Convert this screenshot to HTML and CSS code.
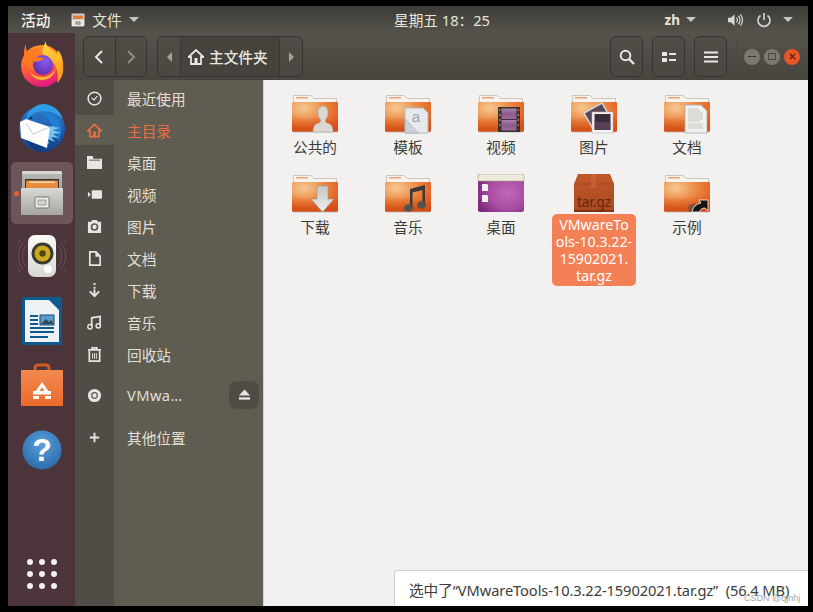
FILE: index.html
```html
<!DOCTYPE html>
<html lang="zh">
<head>
<meta charset="utf-8">
<title>主文件夹</title>
<link rel="stylesheet" href="styles.css">
</head>
<body>
<svg class="defs" aria-hidden="true">
  <defs>
    <radialGradient id="fglow" cx="0.25" cy="0.2" r="0.9">
      <stop offset="0" stop-color="#f6c990"/><stop offset="0.55" stop-color="#ea8440"/><stop offset="1" stop-color="#e2571c"/>
    </radialGradient>
    <linearGradient id="fshade" x1="0" y1="0" x2="0" y2="1">
      <stop offset="0.5" stop-color="#d84e12" stop-opacity="0"/><stop offset="1" stop-color="#cd4a12" stop-opacity="0.85"/>
    </linearGradient>
    <radialGradient id="purple" cx="0.65" cy="0.5" r="0.7">
      <stop offset="0" stop-color="#c068b8"/><stop offset="0.6" stop-color="#a84ca2"/><stop offset="1" stop-color="#7b2a7c"/>
    </radialGradient>
    <linearGradient id="film" x1="0" y1="0" x2="0" y2="1">
      <stop offset="0" stop-color="#a882ac"/><stop offset="0.5" stop-color="#8a5a8c"/><stop offset="1" stop-color="#9c6a98"/>
    </linearGradient>
    <linearGradient id="arrow" x1="0" y1="0" x2="0" y2="1">
      <stop offset="0" stop-color="#c9c7c3"/><stop offset="1" stop-color="#f0efed"/>
    </linearGradient>
    <linearGradient id="box" x1="0" y1="0" x2="0" y2="1">
      <stop offset="0" stop-color="#c2582a"/><stop offset="1" stop-color="#a9481e"/>
    </linearGradient>
    <linearGradient id="fox" x1="0.2" y1="0" x2="0.5" y2="1">
      <stop offset="0" stop-color="#ff9a26"/><stop offset="0.55" stop-color="#ff5a3a"/><stop offset="1" stop-color="#e31587"/>
    </linearGradient>
    <linearGradient id="foxy" x1="0" y1="0" x2="0.6" y2="1">
      <stop offset="0" stop-color="#ffe03c"/><stop offset="1" stop-color="#ff9a22"/>
    </linearGradient>
    <radialGradient id="foxc" cx="0.6" cy="0.3" r="0.8">
      <stop offset="0" stop-color="#8a5cf0"/><stop offset="1" stop-color="#5a2aa6"/>
    </radialGradient>
    <linearGradient id="tb" x1="0" y1="0" x2="0" y2="1">
      <stop offset="0" stop-color="#2a7fd0"/><stop offset="1" stop-color="#153f8a"/>
    </linearGradient>
    <linearGradient id="cabf" x1="0" y1="0" x2="0" y2="1">
      <stop offset="0" stop-color="#d9d8d4"/><stop offset="1" stop-color="#a6a5a1"/>
    </linearGradient>
    <linearGradient id="cab" x1="0" y1="0" x2="0" y2="1">
      <stop offset="0" stop-color="#b9b8b4"/><stop offset="1" stop-color="#8e8d89"/>
    </linearGradient>
    <linearGradient id="spk" x1="0" y1="0" x2="0" y2="1">
      <stop offset="0" stop-color="#fbfbf8"/><stop offset="1" stop-color="#d8d7d0"/>
    </linearGradient>
    <linearGradient id="bag" x1="0" y1="0" x2="0" y2="1">
      <stop offset="0" stop-color="#f1894f"/><stop offset="1" stop-color="#ec6a2c"/>
    </linearGradient>
    <radialGradient id="help" cx="0.5" cy="0.35" r="0.7">
      <stop offset="0" stop-color="#5aa0dc"/><stop offset="1" stop-color="#2a68a8"/>
    </radialGradient>
    <symbol id="folder" viewBox="0 0 48 40">
      <path d="M2.500 1.500H20l3 3h22.500v8h-43z" fill="#f6f4f0" stroke="#c9c5bf"/>
      <rect x="5" y="3" width="12" height="1.600" fill="#f0a576"/>
      <rect x="1" y="8" width="46" height="29.500" rx="1" fill="url(#fglow)"/>
      <rect x="1" y="8" width="46" height="29.500" rx="1" fill="url(#fshade)"/>
      <rect x="2" y="37.500" width="44" height="1" fill="#000" opacity="0.18"/>
    </symbol>
  </defs>
</svg>

<div class="screen">
  <header class="topbar">
    <div class="top-left">
      <span class="top-strong">活动</span>
      <span class="app-menu">
        <svg class="app-ico" viewBox="0 0 14 14"><rect x="0.500" y="0.500" width="13" height="13" rx="1" fill="#cfcdc8"/><rect x="2" y="2.500" width="10" height="3.500" fill="#e8793a"/><rect x="1" y="7" width="12" height="6" fill="#e8e7e4"/><rect x="5" y="9" width="4" height="2" fill="none" stroke="#77756f"/></svg>
        <span>文件</span>
        <i class="caret"></i>
      </span>
    </div>
    <div class="clock">星期五 18：25</div>
    <div class="top-right">
      <span class="lang">zh</span><i class="caret lang-caret"></i>
      <svg class="sys-ico" viewBox="0 0 16 14"><path d="M0 4.500h3L7 1v12L3 9.500H0z" fill="#d8d6d0"/><path d="M9 4.500a3.500 3.500 0 0 1 0 5M11 2.500a6.500 6.500 0 0 1 0 9M13.200 1a9 9 0 0 1 0 12" fill="none" stroke="#d8d6d0" stroke-width="1.300"/></svg>
      <svg class="sys-ico power" viewBox="0 0 16 16"><path d="M4.500 3.500a6 6 0 1 0 7 0M8 1v7" fill="none" stroke="#d8d6d0" stroke-width="1.600"/></svg>
      <i class="caret"></i>
    </div>
  </header>

  <div class="desk">
    <nav class="dock">
      <div class="slot">
        <svg class="ico-fox" viewBox="0 0 44 46">
          <circle cx="22" cy="25" r="21" fill="url(#fox)"/>
          <path d="M26 0c-1 5 4 7 9 11 7 6 9 14 8 20-1 6-4 9-6 11 2-8 0-18-7-24-6-4-9-4-7-11 1-3 2-5 3-7z" fill="url(#foxy)"/>
          <path d="M38 9c4 5 6 12 5 19l-7-9z" fill="url(#foxy)"/>
          <circle cx="23" cy="24" r="10" fill="url(#foxc)"/>
          <path d="M10 30c3 6 14 8 21 3 3-2 5-5 5-8 0 8-6 14-14 14-6 0-11-4-12-9z" fill="#ffb42c"/>
          <path d="M6 3c0 4 0 6 2 8 3-3 8-4 12-3-4 2-7 5-7 8 3 1 8 0 11 1-3 4-8 4-11 3-1 3-1 7 2 10-7-2-11-8-11-14 0-5 0-9 2-13z" fill="#ff7a1f"/>
        </svg>
      </div>
      <div class="slot">
        <svg class="ico-tb" viewBox="0 0 48 48">
          <circle cx="24" cy="25" r="23" fill="url(#tb)"/>
          <path d="M8 16C10 6 18 0 26 0c9 1 16 6 19 15-5-5-12-8-20-8-7 0-13 4-17 9z" fill="#2f9ce8"/>
          <path d="M22 7c8 0 17 5 20 13 2 6 1 12-2 17-1-9-5-18-18-30z" fill="#1f7fd4"/>
          <path d="M33 22l9 2-7 2 8 3-8 1 6 4-8-1 4 5-7-3 1 5-6-4z" fill="#7cc4f0"/>
          <path d="M2 18l6-3 24 8-3 21-26-10z" fill="#fff"/>
          <path d="M8 19l7 11 17-7" fill="none" stroke="#c4ccd4" stroke-width="1"/>
          <circle cx="13" cy="14" r="1.300" fill="#10305c"/>
          <path d="M8 36c6 3 12 6 18 7l-4 4c-6-1-11-5-14-11z" fill="#0f3a7e"/>
        </svg>
      </div>
      <div class="slot slot-active">
        <i class="run-dot"></i>
        <svg class="ico-cab" viewBox="0 0 42 44">
          <rect x="1" y="0" width="40" height="43" rx="2" fill="url(#cab)"/>
          <rect x="1" y="0" width="40" height="3" rx="1.500" fill="#d8d7d3"/>
          <rect x="4" y="8" width="34" height="10" fill="#35322e"/>
          <rect x="5" y="9.500" width="32" height="8" fill="#e88a3c"/>
          <rect x="8" y="10.500" width="26" height="1.500" fill="#f7d9b8"/>
          <rect x="0" y="17" width="42" height="27" rx="1" fill="url(#cabf)"/>
          <rect x="14" y="26" width="14" height="11" rx="1" fill="#eeedea" stroke="#77756f"/>
          <rect x="17" y="29" width="8" height="5" fill="#d3d2cf" stroke="#77756f" stroke-width="0.600"/>
        </svg>
      </div>
      <div class="slot">
        <svg class="ico-spk" viewBox="0 0 48 44">
          <g fill="none" stroke="#7b7690" stroke-width="1" opacity="0.450"><path d="M8 10a18 18 0 0 0 0 22"/><path d="M5 7a23 23 0 0 0 0 28"/><path d="M2 5a27 27 0 0 0 0 32"/><path d="M40 10a18 18 0 0 1 0 22"/><path d="M43 7a23 23 0 0 1 0 28"/><path d="M46 5a27 27 0 0 1 0 32"/></g>
          <rect x="10" y="0" width="28" height="42" rx="7" fill="url(#spk)"/>
          <circle cx="24.500" cy="18.500" r="11" fill="#3b3a34"/>
          <circle cx="24.500" cy="18.500" r="8" fill="#cfa81c"/>
          <circle cx="24.500" cy="18.500" r="3.200" fill="#4f4410"/>
          <circle cx="30" cy="34" r="4.500" fill="#fdfdfb" stroke="#cfcec8" stroke-width="0.500"/>
        </svg>
      </div>
      <div class="slot">
        <svg class="ico-doc" viewBox="0 0 40 48">
          <path d="M2 0h36a2 2 0 0 1 2 2v44a2 2 0 0 1-2 2H2a2 2 0 0 1-2-2V2a2 2 0 0 1 2-2z" fill="#0f5a8c"/>
          <path d="M3 3h24l10 10v32H3z" fill="#eef2f5"/>
          <path d="M28 0h10a2 2 0 0 1 2 2v10z" fill="#0f5a8c"/>
          <path d="M8 18h8v2H8zM8 22h8v2H8zM8 26h8v2H8zM8 30h24v2H8zM8 34h24v2H8zM8 39h18v2H8z" fill="#0f5a8c"/>
          <rect x="18" y="18" width="14" height="10" fill="#5c9ccc" stroke="#174a70"/>
          <path d="M19 27l5-5 3 3 2-2 3 4z" fill="#34495a"/>
        </svg>
      </div>
      <div class="slot">
        <svg class="ico-bag" viewBox="0 0 42 44">
          <path d="M14 12V5q0-3 3-3h8q3 0 3 3v7" fill="none" stroke="#d05a24" stroke-width="3"/>
          <rect x="0" y="7" width="42" height="36" fill="url(#bag)"/>
          <path d="M21 19l-7 10h4l3-5 3 5h4z" fill="#fff"/>
          <rect x="12" y="28" width="18" height="3.500" fill="#fff"/>
          <rect x="12" y="33" width="6" height="3" fill="#fff"/>
          <rect x="24" y="33" width="6" height="3" fill="#fff"/>
        </svg>
      </div>
      <div class="slot">
        <svg class="ico-help" viewBox="0 0 40 40">
          <circle cx="20" cy="20" r="19.500" fill="url(#help)"/>
          <text x="20" y="31" text-anchor="middle" class="help-q">?</text>
        </svg>
      </div>
      <div class="apps">
        <i></i><i></i><i></i><i></i><i></i><i></i><i></i><i></i><i></i>
      </div>
    </nav>

    <main class="window">
      <div class="headerbar">
        <div class="btn-group nav-group">
          <span class="nav-btn"><svg class="chev" viewBox="0 0 10 16"><path d="M8 2L2 8l6 6" fill="none" stroke="#e8e6e0" stroke-width="2"/></svg></span>
          <span class="nav-btn"><svg class="chev" viewBox="0 0 10 16"><path d="M2 2l6 6-6 6" fill="none" stroke="#8f8c82" stroke-width="2"/></svg></span>
        </div>
        <div class="btn-group path-group">
          <span class="path-arrow"><i class="tri tri-l"></i></span>
          <span class="path-cur">
            <svg class="home-ico" viewBox="0 0 16 16"><path d="M8 1L0.500 8h2.500v7h10V8h2.500z" fill="none" stroke="#e8e6e0" stroke-width="1.800"/><rect x="6.500" y="9" width="3" height="5" fill="#e8e6e0"/></svg>
            <span>主文件夹</span>
          </span>
          <span class="path-arrow"><i class="tri tri-r"></i></span>
        </div>
        <div class="head-right">
          <span class="tool"><svg class="tool-ico" viewBox="0 0 16 16"><circle cx="6.500" cy="6.500" r="4.800" fill="none" stroke="#e8e6e0" stroke-width="2"/><path d="M10 10l5 5" stroke="#e8e6e0" stroke-width="2.400"/></svg></span>
          <span class="tool"><svg class="tool-ico" viewBox="0 0 16 16"><path d="M1 3h5v4H1zM1 9h5v4H1zM8 4h7v2H8zM8 10h7v2H8z" fill="#e8e6e0"/></svg></span>
          <span class="tool"><svg class="tool-ico" viewBox="0 0 16 16"><path d="M1 2.500h14v2H1zM1 7h14v2H1zM1 11.500h14v2H1z" fill="#e8e6e0"/></svg></span>
          <span class="head-sep"></span>
          <span class="wbtn"><i class="w-min"></i></span>
          <span class="wbtn"><i class="w-max"></i></span>
          <span class="wbtn wbtn-close"><svg class="w-x" viewBox="0 0 8 8"><path d="M1 1l6 6M7 1L1 7" stroke="#5a1c08" stroke-width="1.500"/></svg></span>
        </div>
      </div>

      <div class="body">
        <aside class="sidebar">
          <div class="side-row">
            <span class="side-ico"><svg viewBox="0 0 16 16"><circle cx="8" cy="8" r="6.800" fill="none" stroke="#e8e6e0" stroke-width="1.600"/><path d="M5 7.500l2.500 2L11 5.500" fill="none" stroke="#e8e6e0" stroke-width="1.200"/></svg></span>
            <span class="side-txt">最近使用</span>
          </div>
          <div class="side-row side-active">
            <span class="side-ico"><svg viewBox="0 0 16 16"><path d="M8 1.500L0.800 8.500h2.400v6h9.600v-6h2.400z" fill="none" stroke="#ee6d3f" stroke-width="1.800"/><rect x="6.500" y="9" width="3" height="5" fill="#ee6d3f"/></svg></span>
            <span class="side-txt">主目录</span>
          </div>
          <div class="side-row">
            <span class="side-ico"><svg viewBox="0 0 16 16"><path d="M0 1h6l1 3h9v11H0z" fill="#e8e6e0"/><path d="M2 5h12v1H2z" fill="#5c5a50"/></svg></span>
            <span class="side-txt">桌面</span>
          </div>
          <div class="side-row">
            <span class="side-ico"><svg viewBox="0 0 16 16"><path d="M1 5l3 3-3 3z" fill="#e8e6e0"/><rect x="5" y="3.500" width="11" height="9" rx="1" fill="#e8e6e0"/></svg></span>
            <span class="side-txt">视频</span>
          </div>
          <div class="side-row">
            <span class="side-ico"><svg viewBox="0 0 16 16"><path d="M1 3h3.500l1-2h5l1 2H15v12H1z" fill="#e8e6e0"/><circle cx="8" cy="8.500" r="3.200" fill="none" stroke="#5c5a50" stroke-width="1.800"/></svg></span>
            <span class="side-txt">图片</span>
          </div>
          <div class="side-row">
            <span class="side-ico"><svg viewBox="0 0 16 16"><path d="M3 1h6.500L14 5.500V15H3z" fill="none" stroke="#e8e6e0" stroke-width="1.800"/><path d="M9 1v5h5z" fill="#e8e6e0"/></svg></span>
            <span class="side-txt">文档</span>
          </div>
          <div class="side-row">
            <span class="side-ico"><svg viewBox="0 0 16 16"><path d="M8 0v2M8 4v2M8 7v6M3 9l5 5 5-5" fill="none" stroke="#e8e6e0" stroke-width="2"/></svg></span>
            <span class="side-txt">下载</span>
          </div>
          <div class="side-row">
            <span class="side-ico"><svg viewBox="0 0 16 16"><path d="M5 12V3l9-1.500V11" fill="none" stroke="#e8e6e0" stroke-width="1.800"/><circle cx="3.200" cy="12.500" r="2.300" fill="none" stroke="#e8e6e0" stroke-width="1.600"/><circle cx="12" cy="11.500" r="2.300" fill="none" stroke="#e8e6e0" stroke-width="1.600"/></svg></span>
            <span class="side-txt">音乐</span>
          </div>
          <div class="side-row">
            <span class="side-ico"><svg viewBox="0 0 16 16"><path d="M1 3h14M5.500 3V1h5v2" fill="none" stroke="#e8e6e0" stroke-width="1.800"/><path d="M2.500 4v11h11V4" fill="none" stroke="#e8e6e0" stroke-width="1.800"/><path d="M6 6.500v6M8 6.500v6M10 6.500v6" stroke="#e8e6e0" stroke-width="1"/></svg></span>
            <span class="side-txt">回收站</span>
          </div>
          <div class="side-row side-mount">
            <span class="side-ico"><svg viewBox="0 0 16 16"><circle cx="8" cy="8" r="7" fill="#e8e6e0"/><circle cx="8" cy="8" r="3" fill="none" stroke="#5c5a50" stroke-width="1.300"/></svg></span>
            <span class="side-txt latin">VMwa…</span>
            <span class="eject"><svg viewBox="0 0 14 12"><path d="M7 0l6 6.500H1z" fill="#e8e6e0"/><rect x="1" y="8.500" width="12" height="2.500" fill="#e8e6e0"/></svg></span>
          </div>
          <div class="side-row side-other">
            <span class="side-ico"><svg viewBox="0 0 16 16"><path d="M3 8h10M8 3v10" stroke="#e8e6e0" stroke-width="2"/></svg></span>
            <span class="side-txt">其他位置</span>
          </div>
        </aside>

        <section class="files">
          <div class="file">
            <svg class="f-ico" viewBox="0 0 48 40"><use href="#folder"/>
              <path d="M22 38c0-6 2-8 6-9 2-1 2-2 1-4-2-2-2-5-2-7 0-3 2-6 5-6s5 3 5 6c0 2 0 5-2 7-1 2-1 3 1 4 4 1 6 3 6 9z" fill="#dbd8d2" stroke="#a8a59f" stroke-width="0.600"/>
            </svg>
            <span class="f-name">公共的</span>
          </div>
          <div class="file">
            <svg class="f-ico" viewBox="0 0 48 40"><use href="#folder"/>
              <path d="M21 14h18l5 5v20H21z" fill="#e6e8ec" stroke="#b4b8c0"/>
              <path d="M21 25l13 14H21z" fill="#cdd0d6" stroke="#a0a4ac" stroke-width="0.600"/>
              <text x="32" y="28" text-anchor="middle" class="tpl-a">a</text>
            </svg>
            <span class="f-name">模板</span>
          </div>
          <div class="file">
            <svg class="f-ico" viewBox="0 0 48 40"><use href="#folder"/>
              <rect x="21" y="13" width="22" height="25" fill="#3a322e"/>
              <rect x="24.500" y="14.500" width="15" height="10.500" fill="url(#film)"/>
              <rect x="24.500" y="26" width="15" height="10.500" fill="url(#film)"/>
              <path d="M22 15h1.500v2H22zM22 20h1.500v2H22zM22 25h1.500v2H22zM22 30h1.500v2H22zM40.500 15H42v2h-1.500zM40.500 20H42v2h-1.500zM40.500 25H42v2h-1.500zM40.500 30H42v2h-1.500z" fill="#c8703c"/>
            </svg>
            <span class="f-name">视频</span>
          </div>
          <div class="file">
            <svg class="f-ico" viewBox="0 0 48 40"><use href="#folder"/>
              <path d="M14 19l18-10 8 14-18 10z" fill="#55485a" stroke="#d8d6d2" stroke-width="1.500"/>
              <rect x="22" y="18" width="21" height="21" fill="#f4f3f1" stroke="#b8b5b0" stroke-width="0.600"/>
              <rect x="24.500" y="20" width="16" height="16" fill="#3b2c3c"/>
              <rect x="24.500" y="28" width="16" height="8" fill="#6a4f66" opacity="0.600"/>
            </svg>
            <span class="f-name">图片</span>
          </div>
          <div class="file">
            <svg class="f-ico" viewBox="0 0 48 40"><use href="#folder"/>
              <path d="M22 11h16l6 6v22H22z" fill="#f2f1ef" stroke="#aeaca8" stroke-width="0.800"/>
              <path d="M25 15h10M25 17h12M25 19h15M25 21h15M25 23h15M25 25h15M25 27h12M25 30h15M25 32h15M25 34h15" stroke="#bdbbb7" stroke-width="0.800"/>
            </svg>
            <span class="f-name">文档</span>
          </div>

          <div class="file">
            <svg class="f-ico" viewBox="0 0 48 40"><use href="#folder"/>
              <path d="M26 12h11v13h6L31.500 38 20 25h6z" fill="url(#arrow)" stroke="#9a9894" stroke-width="0.700"/>
            </svg>
            <span class="f-name">下载</span>
          </div>
          <div class="file">
            <svg class="f-ico" viewBox="0 0 48 40"><use href="#folder"/>
              <path d="M26 34V15l15-4v20h-2.500V16l-10 2.500V34z" fill="#3c3a38"/>
              <ellipse cx="24.500" cy="34" rx="4.500" ry="3.800" fill="#55534f"/>
              <ellipse cx="37.500" cy="31" rx="4.500" ry="3.800" fill="#55534f"/>
            </svg>
            <span class="f-name">音乐</span>
          </div>
          <div class="file">
            <svg class="f-ico" viewBox="0 0 48 40">
              <rect x="1" y="0" width="46" height="38" rx="2" fill="url(#purple)"/>
              <path d="M1 7V2a2 2 0 0 1 2-2h42a2 2 0 0 1 2 2v5z" fill="#eeeadb" stroke="#a8a184" stroke-width="0.600"/>
              <path d="M5 10h5l1 1v6H5zM5 21h5l1 1v6H5z" fill="#f2eef2"/>
            </svg>
            <span class="f-name">桌面</span>
          </div>
          <div class="file file-sel">
            <svg class="f-ico" viewBox="0 0 48 40">
              <path d="M8 0h32l4 10v28H4V10z" fill="url(#box)"/>
              <path d="M4 10h40" stroke="#93401b" stroke-width="0.600"/>
              <rect x="21" y="0" width="5" height="14" fill="#d07042" opacity="0.450"/>
              <rect x="4" y="36" width="40" height="2" fill="#7d3514"/>
              <text x="24" y="33" text-anchor="middle" class="tar-t">tar.gz</text>
            </svg>
            <span class="f-name sel-name">VMwareTo<br>ols-10.3.22-<br>15902021.<br>tar.gz</span>
          </div>
          <div class="file">
            <svg class="f-ico" viewBox="0 0 48 40"><use href="#folder"/>
              <path d="M25 33c3-4 6-4 9-3-3 1-4 4-5 8h-3z" fill="#6a5048" opacity="0.800"/>
              <path d="M29 38c1-5 4-8 9-9l-2-3h9v11l-3-3c-3 0-4 1-6 4z" fill="#141414" stroke="#fff" stroke-width="0.800"/>
            </svg>
            <span class="f-name">示例</span>
          </div>
        </section>
      </div>
    </main>
  </div>

  <div class="status">选中了“VMwareTools-10.3.22-15902021.tar.gz”  (56.4 MB)</div>
</div>
<div class="watermark">CSDN @qjnhj</div>
</body>
</html>
```

FILE: styles.css
```css
* { box-sizing: border-box; }
html, body { margin: 0; padding: 0; height: 100%; overflow: hidden; }
body {
  background: #000;
  position: relative;
  font-family: "Noto Sans", "Noto Sans CJK SC", sans-serif;
  font-size: 14.67px;
}
.defs { position: absolute; width: 0; height: 0; }
i { display: block; font-style: normal; }

.screen {
  position: relative;
  width: 800px;
  height: 600px;
  margin: 6px 0 0 8px;
  display: flex;
  flex-direction: column;
  overflow: hidden;
}

/* top bar */
.topbar {
  height: 27px;
  flex: none;
  display: grid;
  grid-template-columns: 386px auto 1fr;
  align-items: center;
  background: linear-gradient(#3c3b37, #55534b);
  color: #e6e4de;
}
.top-left { display: flex; align-items: center; padding-left: 13px; gap: 21px; }
.top-strong { color: #f4f3ef; font-weight: 500; }
.app-menu { display: flex; align-items: center; gap: 7px; }
.app-ico { width: 14px; height: 14px; }
.caret {
  width: 0;
  height: 0;
  border-left: 5px solid transparent;
  border-right: 5px solid transparent;
  border-top: 5px solid #c9c6bf;
}
.clock { color: #e6e4de; }
.top-right { display: flex; align-items: center; justify-content: flex-end; padding-right: 15px; }
.lang { font-weight: 700; font-size: 13.5px; color: #e6e4de; margin-right: 6px; }
.lang-caret { margin-right: 32px; }
.sys-ico { width: 15px; height: 14px; }
.power { width: 16px; height: 16px; margin: 0 11px 0 13px; }

.desk { flex: 1; display: flex; min-height: 0; }

/* launcher */
.dock {
  width: 67px;
  flex: none;
  display: flex;
  flex-direction: column;
  align-items: center;
  background: #4b343a;
  gap: 2.25px;
}
.slot {
  position: relative;
  width: 62px;
  height: 62px;
  flex: none;
  display: flex;
  align-items: center;
  justify-content: center;
  border-radius: 5px;
}
.slot-active { background: #6c565a; }
.run-dot {
  position: absolute;
  left: 3px;
  top: 29px;
  width: 5px;
  height: 5px;
  border-radius: 50%;
  background: #e9622e;
}
.ico-fox { width: 44px; height: 46px; }
.ico-tb { width: 48px; height: 48px; }
.ico-cab { width: 42px; height: 44px; }
.ico-spk { width: 48px; height: 44px; }
.ico-doc { width: 40px; height: 48px; }
.ico-bag { width: 42px; height: 44px; }
.ico-help { width: 40px; height: 40px; }
.help-q { font-family: "Liberation Sans", sans-serif; font-size: 32px; font-weight: 700; fill: #fff; }
.apps {
  margin-top: auto;
  margin-bottom: 17px;
  display: grid;
  grid-template-columns: repeat(3, 6px);
  gap: 6px;
}
.apps i { width: 6px; height: 6px; border-radius: 50%; background: #f2efef; }

/* window */
.window { flex: 1; display: flex; flex-direction: column; min-width: 0; }
.headerbar {
  height: 47px;
  flex: none;
  display: flex;
  align-items: center;
  gap: 10px;
  padding: 0 8px;
  background: linear-gradient(#55534b, #47453e);
  color: #e8e6e0;
}
.btn-group {
  height: 41px;
  display: flex;
  border: 1px solid #37352f;
  border-radius: 6px;
  overflow: hidden;
  background: linear-gradient(#4f4d45, #4a4840);
}
.nav-group { width: 64px; }
.nav-btn { flex: 1; display: flex; align-items: center; justify-content: center; }
.nav-btn + .nav-btn { border-left: 1px solid #37352f; }
.chev { width: 10px; height: 16px; }
.path-group { width: 146px; }
.path-arrow { width: 22px; flex: none; display: flex; align-items: center; justify-content: center; }
.tri { width: 0; height: 0; border-top: 5px solid transparent; border-bottom: 5px solid transparent; }
.tri-l { border-right: 5px solid #a6a39a; }
.tri-r { border-left: 5px solid #a6a39a; }
.path-cur {
  flex: 1;
  display: flex;
  align-items: center;
  gap: 5px;
  padding-left: 7px;
  background: #45433c;
  font-weight: 500;
  white-space: nowrap;
  border-left: 1px solid #3a3832;
  border-right: 1px solid #3a3832;
}
.home-ico { width: 16px; height: 16px; }
.head-right { margin-left: auto; display: flex; align-items: center; }
.tool {
  width: 33px;
  height: 41px;
  margin-right: 9px;
  display: flex;
  align-items: center;
  justify-content: center;
  border: 1px solid #37352f;
  border-radius: 6px;
  background: linear-gradient(#4f4d45, #4a4840);
}
.tool-ico { width: 16px; height: 16px; }
.head-sep { width: 1px; height: 36px; background: #4a4840; margin-right: 7px; }
.wbtn {
  width: 16px;
  height: 16px;
  margin-right: 4px;
  border-radius: 50%;
  background: #7c7a70;
  display: flex;
  align-items: center;
  justify-content: center;
}
.wbtn-close { background: #e8562a; margin-right: 0; }
.w-min { width: 8px; height: 1.5px; background: #3e3c36; }
.w-max { width: 8px; height: 7px; border: 1.5px solid #4c4a43; }
.w-x { width: 7px; height: 7px; }

.body { flex: 1; display: flex; min-height: 0; }

/* sidebar */
.sidebar {
  width: 189px;
  flex: none;
  display: flex;
  flex-direction: column;
  padding-top: 2px;
  background: linear-gradient(90deg, #4f4d45 0, #4f4d45 39px, #5f5d51 39px);
  border-right: 1px solid #d5d2cb;
  color: #e3dfd6;
}
.side-row {
  height: 32px;
  flex: none;
  display: flex;
  align-items: center;
}
.side-ico { width: 39px; flex: none; display: flex; justify-content: center; align-items: center; height: 100%; }
.side-ico svg { width: 15px; height: 15px; }
.side-txt { margin-left: 13px; }
.latin { letter-spacing: 0.4px; }
.side-active .side-ico { background: #5f5d51; height: 30px; }
.side-active .side-txt { color: #ee6d3f; }
.side-mount { margin-top: 9px; }
.side-other { margin-top: 10px; }
.eject {
  margin-left: auto;
  margin-right: 4px;
  width: 30px;
  height: 28px;
  display: flex;
  align-items: center;
  justify-content: center;
  border-radius: 8px;
  background: #4e4c44;
}
.eject svg { width: 13px; height: 12px; }

/* files */
.files {
  flex: 1;
  background: #f2f1f0;
  padding: 10px 0 0 4.5px;
  display: grid;
  grid-template-columns: repeat(5, 93px);
  grid-auto-rows: 80px;
  align-content: start;
  color: #3d3c38;
}
.file { display: flex; flex-direction: column; align-items: center; padding-top: 4px; }
.f-ico { width: 48px; height: 40px; flex: none; }
.f-name { margin-top: 4px; line-height: 18px; white-space: nowrap; }
.sel-name {
  margin-top: 0;
  width: 84px;
  padding: 2px 0;
  font-size: 14.2px;
  line-height: 17px;
  text-align: center;
  border-radius: 5px;
  background: #f48155;
  color: #fff;
}
.tpl-a { font-family: "Liberation Sans", sans-serif; font-size: 15px; fill: #9ea2aa; }
.tar-t { font-family: "Noto Sans", sans-serif; font-size: 13.5px; fill: #5e2a0f; }

/* floating status */
.status {
  position: absolute;
  right: 0;
  bottom: 0;
  width: 414px;
  height: 36px;
  padding: 4px 0 0 14px;
  background: #fff;
  border: 1px solid #d2cfc9;
  border-right: 0;
  border-bottom: 0;
  border-radius: 3px 0 0 0;
  color: #3d3c38;
  line-height: 30px;
  letter-spacing: -0.1px;
  white-space: pre;
}
.watermark {
  position: absolute;
  left: 744px;
  top: 592px;
  font-family: "Liberation Sans", sans-serif;
  font-size: 9px;
  line-height: 12px;
  color: #a6a6a6;
}
```
